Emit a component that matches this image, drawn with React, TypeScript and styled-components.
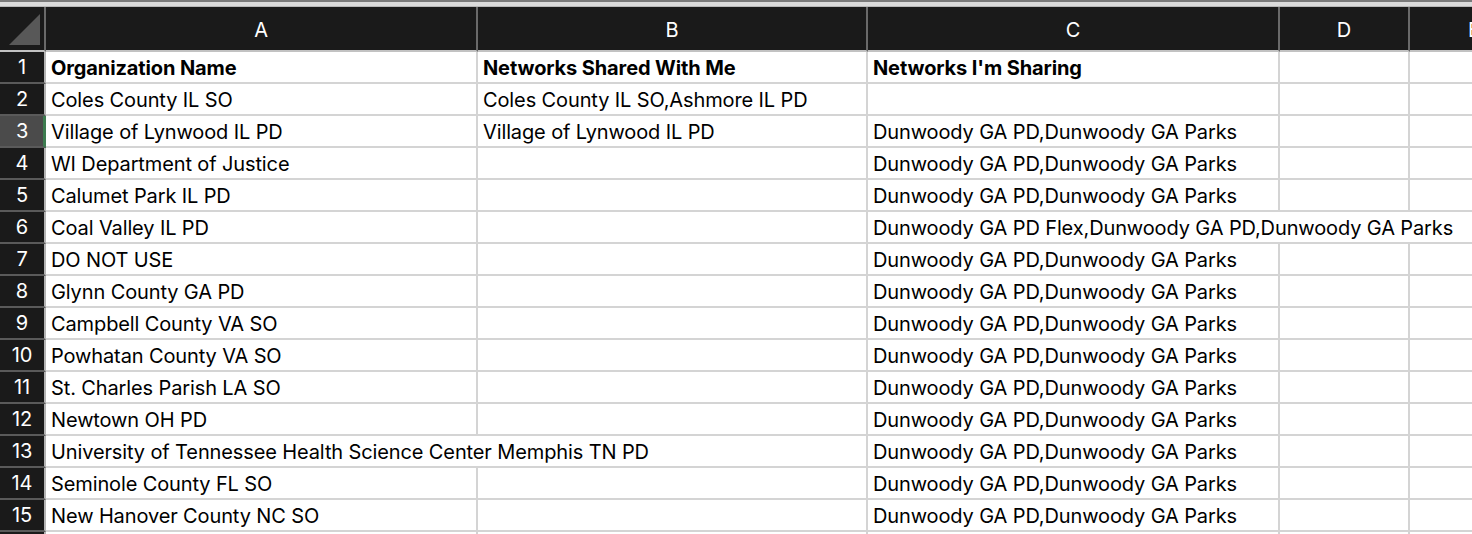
import React from "react";
import styled, { createGlobalStyle } from "styled-components";

const GlobalStyle = createGlobalStyle`
  html, body {
    margin: 0;
    padding: 0;
    background: #ffffff;
    overflow: hidden;
  }
  body {
    font-family: "Inter", "Liberation Sans", sans-serif;
  }
`;

const Page = styled.div`
  width: 1472px;
  height: 534px;
  overflow: hidden;
  background: #ffffff;
  display: flex;
  flex-direction: column;
`;

const TopStrip = styled.div`
  height: 7px;
  box-sizing: border-box;
  border-top: 2px solid #7a7a7a;
  border-bottom: 1px solid #b8b8b8;
  background: #dadada;
  flex: none;
`;

const Sheet = styled.div`
  display: grid;
  grid-template-columns: 46px 432px 390px 412px 130px 130px;
  grid-auto-rows: 32px;
  grid-template-rows: 45px;
  width: max-content;
  font-family: "Inter", "Liberation Sans", sans-serif;
  font-size: 20px;
  letter-spacing: -0.12px;
`;

const Corner = styled.div`
  background: #1a1a1a;
  box-sizing: border-box;
  border-right: 2px solid #6a6a6a;
  border-bottom: 2px solid #c2c2c2;
  display: flex;
  align-items: flex-end;
  justify-content: flex-end;
  padding: 0 4px 5px 0;
`;

const ColHead = styled.div`
  background: #1a1a1a;
  color: #ffffff;
  box-sizing: border-box;
  border-right: 2px solid #6a6a6a;
  border-bottom: 2px solid #c2c2c2;
  display: flex;
  align-items: center;
  justify-content: center;
  padding-top: 3px;
  overflow: hidden;
`;

const RowHead = styled.div<{ $active?: boolean }>`
  background: ${(p) => (p.$active ? "#4b4b4b" : "#1a1a1a")};
  color: #ffffff;
  box-sizing: border-box;
  border-right: ${(p) => (p.$active ? "3px solid #3d7c50" : "2px solid #b4b4b4")};
  border-bottom: 2px solid #5a5a5a;
  display: flex;
  align-items: center;
  justify-content: center;
  padding-left: ${(p) => (p.$active ? "1px" : "0")};
`;

const Cell = styled.div<{ $bold?: boolean; $span?: number }>`
  grid-column: span ${(p) => p.$span ?? 1};
  box-sizing: border-box;
  border-right: 2px solid #d4d4d4;
  border-bottom: 2px solid #d4d4d4;
  color: #000000;
  font-weight: ${(p) => (p.$bold ? 700 : 400)};
  white-space: nowrap;
  display: flex;
  align-items: center;
  padding: 1px 0 0 5px;
  overflow: hidden;
`;

const CornerMark = () => (
  <svg width="31" height="31" viewBox="0 0 31 31">
    <polygon points="0,31 31,0 31,31" fill="#585858" />
  </svg>
);

type Row = { a: string; b: string; c: string; aSpan?: number; cSpan?: number };

const rows: Row[] = [
  { a: "Coles County IL SO", b: "Coles County IL SO,Ashmore IL PD", c: "" },
  { a: "Village of Lynwood IL PD", b: "Village of Lynwood IL PD", c: "Dunwoody GA PD,Dunwoody GA Parks" },
  { a: "WI Department of Justice", b: "", c: "Dunwoody GA PD,Dunwoody GA Parks" },
  { a: "Calumet Park IL PD", b: "", c: "Dunwoody GA PD,Dunwoody GA Parks" },
  {
    a: "Coal Valley IL PD",
    b: "",
    c: "Dunwoody GA PD Flex,Dunwoody GA PD,Dunwoody GA Parks",
    cSpan: 3,
  },
  { a: "DO NOT USE", b: "", c: "Dunwoody GA PD,Dunwoody GA Parks" },
  { a: "Glynn County GA PD", b: "", c: "Dunwoody GA PD,Dunwoody GA Parks" },
  { a: "Campbell County VA SO", b: "", c: "Dunwoody GA PD,Dunwoody GA Parks" },
  { a: "Powhatan County VA SO", b: "", c: "Dunwoody GA PD,Dunwoody GA Parks" },
  { a: "St. Charles Parish LA SO", b: "", c: "Dunwoody GA PD,Dunwoody GA Parks" },
  { a: "Newtown OH PD", b: "", c: "Dunwoody GA PD,Dunwoody GA Parks" },
  {
    a: "University of Tennessee Health Science Center Memphis TN PD",
    b: "",
    c: "Dunwoody GA PD,Dunwoody GA Parks",
    aSpan: 2,
  },
  { a: "Seminole County FL SO", b: "", c: "Dunwoody GA PD,Dunwoody GA Parks" },
  { a: "New Hanover County NC SO", b: "", c: "Dunwoody GA PD,Dunwoody GA Parks" },
];

export default function App() {
  return (
    <Page>
      <GlobalStyle />
      <TopStrip />
      <Sheet>
        <Corner>
          <CornerMark />
        </Corner>
        {["A", "B", "C", "D", "E"].map((l) => (
          <ColHead key={l}>{l}</ColHead>
        ))}

        <RowHead>1</RowHead>
        <Cell $bold>Organization Name</Cell>
        <Cell $bold>Networks Shared With Me</Cell>
        <Cell $bold>Networks I'm Sharing</Cell>
        <Cell />
        <Cell />

        {rows.map((r, i) => {
          const n = i + 2;
          return (
            <React.Fragment key={n}>
              <RowHead $active={n === 3}>{n}</RowHead>
              <Cell $span={r.aSpan}>{r.a}</Cell>
              {r.aSpan ? null : <Cell>{r.b}</Cell>}
              <Cell $span={r.cSpan}>{r.c}</Cell>
              {r.cSpan ? null : (
                <>
                  <Cell />
                  <Cell />
                </>
              )}
            </React.Fragment>
          );
        })}

        <RowHead />
        <Cell />
        <Cell />
        <Cell />
        <Cell />
        <Cell />
      </Sheet>
    </Page>
  );
}
